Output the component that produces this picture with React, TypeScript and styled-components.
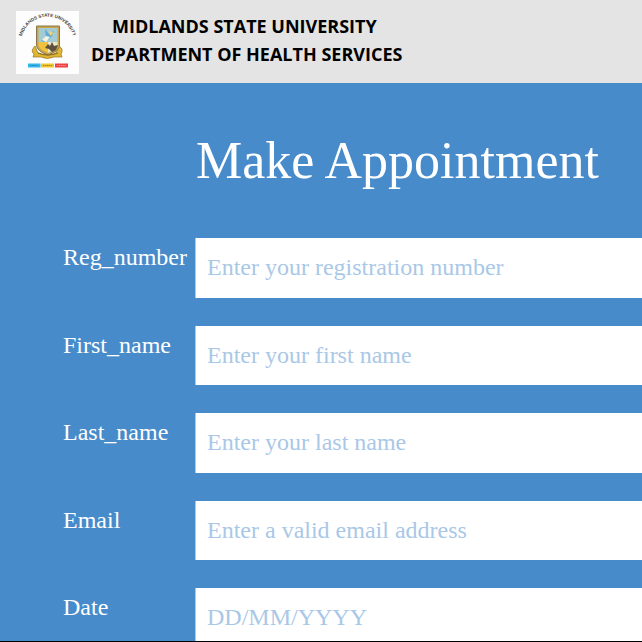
import React from "react";
import styled, { createGlobalStyle } from "styled-components";

const GlobalStyle = createGlobalStyle`
  * { box-sizing: border-box; }
  body { margin: 0; background: #478bca; }
`;

const Page = styled.div`
  display: flex;
  flex-direction: column;
  height: 100vh;
  border-bottom: 1px solid #000;
  font-family: "Liberation Serif", "Times New Roman", serif;
`;

const Header = styled.header`
  display: flex;
  flex: none;
  align-items: flex-start;
  gap: 12px;
  padding: 11px 16px 9px;
  background: #e4e4e4;
`;

const Logo = styled.svg`
  display: block;
  flex: none;
  width: 63px;
  height: 63px;
`;

const Organisation = styled.p`
  margin: 0;
  padding-top: 1px;
  color: #000;
  font: 700 18px/28px "Open Sans", "Noto Sans", sans-serif;
  text-align: center;
`;

const Line = styled.span`
  display: block;
  white-space: pre;
`;

const Main = styled.main`
  flex: 1;
  min-height: 0;
  overflow-y: auto;
  scrollbar-width: none;
  padding-left: 63px;
  background: #478bca;
  color: #fff;
`;

const Title = styled.h1`
  margin: 0 0 47px 133px;
  padding-top: 48px;
  font-size: 52px;
  font-weight: 400;
  line-height: 60px;
`;

const Form = styled.form`
  display: grid;
  grid-template-columns: 132px minmax(0, 1fr);
  grid-auto-rows: 60px 59px;
  row-gap: 28px;
`;

const Label = styled.label`
  padding-top: 5px;
  font-size: 24px;
  line-height: 28px;
`;

const Input = styled.input`
  width: 100%;
  height: 100%;
  padding: 0 11px 1px;
  border: 0;
  border-left: 1px solid #a9c9e7;
  border-radius: 0;
  outline: 0;
  background: #fff;
  color: #478bca;
  font: 24px/28px "Liberation Serif", "Times New Roman", serif;

  &::placeholder {
    color: #a9c8e7;
    opacity: 1;
  }
`;

const fields = [
  { id: "reg_number", label: "Reg_number", hint: "Enter your registration number", type: "text" },
  { id: "first_name", label: "First_name", hint: "Enter your first name", type: "text" },
  { id: "last_name", label: "Last_name", hint: "Enter your last name", type: "text" },
  { id: "email", label: "Email", hint: "Enter a valid email address", type: "email" },
  { id: "date", label: "Date", hint: "DD/MM/YYYY", type: "text" },
];

function Crest() {
  return (
    <Logo viewBox="0 0 63 63" role="img" aria-label="Midlands State University crest">
      <rect width="63" height="63" fill="#fdfdfd" />
      <path id="crest-arc" d="M6 25 A26.5 26.5 0 0 1 57 25" fill="none" />
      <text fontFamily="Liberation Sans, sans-serif" fontWeight="700" fontSize="4.6" fill="#3a3a3a">
        <textPath href="#crest-arc" startOffset="50%" textAnchor="middle">
          MIDLANDS STATE UNIVERSITY
        </textPath>
      </text>
      <path d="M19 35 Q14 40 18 43 L17 46 L25 46 Q31 49 38 46 L46 46 L45 43 Q48 38 43 35 L40 42 Q32 46 22 42Z" fill="#e0b52f" stroke="#927226" strokeWidth=".7" />
      <path d="M20.5 15 H43.5 V34 Q43.5 40 32 44 Q20.5 40 20.5 34Z" fill="#c9a64c" stroke="#8b7449" />
      <path d="M22.5 17 H41.5 V31 H22.5Z" fill="#a4cbd2" />
      <path d="M22.5 31 H32 V42 Q22.5 38 22.5 34Z" fill="#f0c23d" />
      <path d="M32 31 H41.5 V34 Q41 38 32 42Z" fill="#ece5c7" />
      <path d="M29 18 L33 23 L38 20 L36 25 L33 28 L28 31 L25 30 L30 26Z" fill="#5ba9df" />
      <path d="M33 20 L38 22 L34 25Z" fill="#f4d36c" />
      <path d="M26 29 L30 25 L34 26 L30 31Z" fill="#f5f2df" />
      <path d="M29 37 L32 33 L34 35 L36 31 L38 35 L42 34 L40 39 L36 41 L33 38Z" fill="#60513a" />
      <path d="M22 42 Q32 46 42 42" fill="none" stroke="#8b6c24" strokeWidth="1.2" />
      <rect x="12" y="52.5" width="12.5" height="4" fill="#35b6e8" />
      <rect x="25" y="52.5" width="13" height="4" fill="#f1c72f" />
      <rect x="39" y="52.5" width="13" height="4" fill="#ed4242" />
      <path d="M14 54.5 H22" stroke="#1c93c6" strokeDasharray="1.5 .5" />
      <path d="M27 54.5 H36" stroke="#a58a25" strokeDasharray="1.5 .5" />
      <path d="M41 54.5 H50" stroke="#f58984" strokeDasharray="1.5 .5" />
    </Logo>
  );
}

export default function App() {
  return (
    <>
      <GlobalStyle />
      <Page>
        <Header>
          <Crest />
          <Organisation>
            <Line>{"MIDLANDS STATE UNIVERSITY "}</Line>
            <Line>DEPARTMENT OF HEALTH SERVICES</Line>
          </Organisation>
        </Header>
        <Main>
          <Title>Make Appointment</Title>
          <Form>
            {fields.map((field) => (
              <React.Fragment key={field.id}>
                <Label htmlFor={field.id}>{field.label}</Label>
                <Input id={field.id} name={field.id} type={field.type} placeholder={field.hint} />
              </React.Fragment>
            ))}
          </Form>
        </Main>
      </Page>
    </>
  );
}
